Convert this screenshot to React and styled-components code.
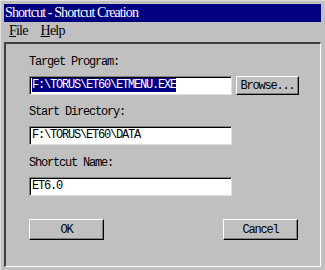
import styled, { createGlobalStyle } from "styled-components";

const GlobalStyle = createGlobalStyle`
    html, body {
        margin: 0;
        padding: 0;
        background: #c0c0c0;
    }
`;

// Window frame and bars

const Window = styled.div`
    width: 325px;
    height: 270px;
    box-sizing: border-box;
    padding: 3px 4px 3px 3px;
    display: flex;
    flex-direction: column;
    background: #c0c0c0;
    border-top: 1px solid #dfdfdf;
    border-left: 1px solid #dfdfdf;
`;

const TitleBar = styled.div`
    height: 18px;
    background: #000080;
    color: #ffffff;
    font-family: "Liberation Serif", serif;
    font-size: 14px;
    letter-spacing: -0.9px;
    line-height: 18px;
    padding-left: 1px;
    white-space: nowrap;
`;

const MenuBar = styled.div`
    height: 18px;
    display: flex;
    gap: 13px;
    padding-left: 5px;
    font-family: "Liberation Serif", serif;
    font-size: 14px;
    letter-spacing: -0.8px;
    line-height: 18px;
    color: #000;
`;

const MenuItem = styled.span`
    & u {
        text-decoration: underline;
        text-underline-offset: 1px;
    }
`;

const Panel = styled.div`
    flex: 1;
    margin-top: 2px;
    border-top: 2px solid #404040;
    border-left: 2px solid #404040;
    border-right: 1px solid #ffffff;
    border-bottom: 1px solid #ffffff;
    padding: 9px 0 0 23px;
    display: flex;
    flex-direction: column;
    font-family: "Liberation Mono", monospace;
    font-size: 12px;
    letter-spacing: -1.2px;
    color: #000;
`;

// Form parts

const Label = styled.div`
    height: 14px;
    line-height: 14px;
    margin-top: ${(p) => p.$top}px;
    white-space: nowrap;
`;

const Row = styled.div`
    display: flex;
    align-items: center;
    gap: 4px;
    margin-top: ${(p) => p.$top}px;
`;

const Field = styled.div`
    width: 203px;
    height: 19px;
    box-sizing: border-box;
    background: #ffffff;
    border-top: 1px solid #808080;
    border-left: 1px solid #808080;
    border-right: 1px solid #dfdfdf;
    border-bottom: 1px solid #dfdfdf;
    box-shadow: inset 1px 1px 0 #000000;
    padding: 1px 0 0 2px;
    line-height: 15px;
    white-space: nowrap;
    overflow: hidden;
`;

const Selected = styled.span`
    background: #000080;
    color: #ffffff;
`;

const Button = styled.div`
    width: ${(p) => p.$width}px;
    height: ${(p) => p.$height}px;
    box-sizing: border-box;
    display: flex;
    align-items: center;
    justify-content: center;
    background: #c0c0c0;
    border-top: 1px solid #ffffff;
    border-left: 1px solid #ffffff;
    border-right: 1px solid #000000;
    border-bottom: 1px solid #000000;
    box-shadow: inset -1px -1px 0 #808080;
    white-space: nowrap;
`;

const ButtonRow = styled.div`
    display: flex;
    justify-content: space-between;
    width: 269px;
    margin-top: 23px;
`;

function App() {
    return (
        <>
            <GlobalStyle />
            <Window>
                <TitleBar>Shortcut - Shortcut Creation</TitleBar>
                <MenuBar>
                    <MenuItem><u>F</u>ile</MenuItem>
                    <MenuItem><u>H</u>elp</MenuItem>
                </MenuBar>
                <Panel>
                    <Label $top={2}>Target Program:</Label>
                    <Row $top={7}>
                        <Field><Selected>F:\TORUS\ET60\ETMENU.EXE</Selected></Field>
                        <Button $width={63} $height={19}>Browse...</Button>
                    </Row>
                    <Label $top={10}>Start Directory:</Label>
                    <Row $top={7}>
                        <Field>F:\TORUS\ET60\DATA</Field>
                    </Row>
                    <Label $top={11}>Shortcut Name:</Label>
                    <Row $top={7}>
                        <Field>ET6.0</Field>
                    </Row>
                    <ButtonRow>
                        <Button $width={75} $height={21}>OK</Button>
                        <Button $width={75} $height={21}>Cancel</Button>
                    </ButtonRow>
                </Panel>
            </Window>
        </>
    );
}

export default App;
